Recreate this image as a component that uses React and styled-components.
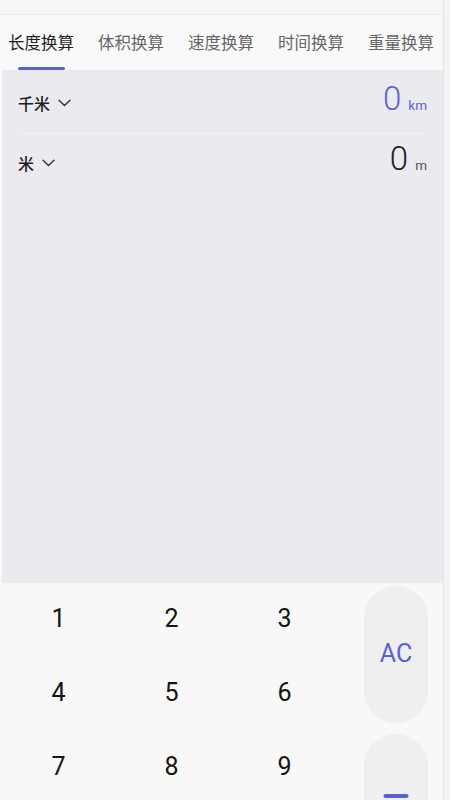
import React from 'react'
import styled, { createGlobalStyle } from 'styled-components'

const GlobalStyle = createGlobalStyle`
  html, body {
    margin: 0;
    padding: 0;
    background: #f8f8f8;
  }
  #root {
    width: 450px;
    height: 800px;
    overflow: hidden;
  }
`

const tabs = ['长度换算', '体积换算', '速度换算', '时间换算', '重量换算']
const keys = ['1', '2', '3', '4', '5', '6', '7', '8', '9']

const Chevron = () => (
  <svg width="13" height="8" viewBox="0 0 13 8" fill="none">
    <path d="M1 1.2L6.5 6.5L12 1.2" stroke="#333" strokeWidth="1.4" strokeLinecap="round" strokeLinejoin="round" />
  </svg>
)

export default function App() {
  return (
    <Page>
      <GlobalStyle />
      <Main>
        <StatusStrip />
        <TabBar>
          {tabs.map((t, i) => (
            <Tab key={t} active={i === 0}>
              {t}
              {i === 0 && <Indicator />}
            </Tab>
          ))}
        </TabBar>
        <Content>
          <UnitRow h={63}>
            <UnitPicker>
              千米 <Chevron />
            </UnitPicker>
            <Value>
              <Number active>0</Number>
              <Unit active>km</Unit>
            </Value>
          </UnitRow>
          <Divider />
          <UnitRow h={55}>
            <UnitPicker>
              米 <Chevron />
            </UnitPicker>
            <Value>
              <Number>0</Number>
              <Unit>m</Unit>
            </Value>
          </UnitRow>
        </Content>
        <Keypad>
          {keys.map((k, i) => (
            <Key key={k} style={{ gridColumn: (i % 3) + 1, gridRow: Math.floor(i / 3) + 1 }}>
              {k}
            </Key>
          ))}
          <Pill row="1 / span 2">AC</Pill>
          <Pill row="3 / span 2">
            <MinusBar />
          </Pill>
        </Keypad>
      </Main>
      <SideStrip />
    </Page>
  )
}

const Page = styled.div`
  display: flex;
  width: 450px;
  height: 800px;
  font-family: Roboto, "Noto Sans CJK SC", sans-serif;
`

const Main = styled.div`
  flex: 1;
  display: flex;
  flex-direction: column;
  min-width: 0;
  overflow: hidden;
`

const SideStrip = styled.div`
  width: 6px;
  background: #f3f3f4;
  border-left: 1px solid #e4e4e6;
`

const StatusStrip = styled.div`
  flex-shrink: 0;
  height: 14px;
  background: #f6f6f6;
  border-bottom: 1px solid #ececec;
`

const TabBar = styled.div`
  flex-shrink: 0;
  height: 55px;
  display: flex;
  gap: 24px;
  padding-left: 8px;
  background: #f9f9f9;
  box-sizing: border-box;
`

const Tab = styled.div`
  position: relative;
  flex-shrink: 0;
  font-family: "Noto Sans CJK SC", sans-serif;
  font-size: 16.5px;
  line-height: 55px;
  height: 55px;
  color: ${p => (p.active ? '#1f1f1f' : '#666')};
  white-space: nowrap;
`

const Indicator = styled.span`
  position: absolute;
  left: 10px;
  bottom: 0;
  width: 47px;
  height: 3.5px;
  border-radius: 2px;
  background: #5a5fd6;
`

const Content = styled.div`
  flex-shrink: 0;
  height: 513px;
  background: #ebeaef;
  margin-left: 2px;
  padding: 0 15px;
`

const UnitRow = styled.div`
  height: ${p => p.h}px;
  display: flex;
  align-items: center;
  justify-content: space-between;
`

const UnitPicker = styled.div`
  display: flex;
  align-items: center;
  gap: 8px;
  margin-top: 2px;
  font-family: "Noto Sans CJK SC", sans-serif;
  font-size: 16px;
  font-weight: 500;
  color: #222;
  padding-left: 1px;
`

const Value = styled.div`
  display: flex;
  align-items: baseline;
  gap: 7px;
  margin-top: -6px;
  padding-right: 1px;
`

const Number = styled.span`
  font-size: 33px;
  font-weight: 300;
  color: ${p => (p.active ? '#5a62d6' : '#222')};
`

const Unit = styled.span`
  font-size: 13.5px;
  color: ${p => (p.active ? '#5a62d6' : '#555')};
`

const Divider = styled.div`
  height: 1px;
  margin: 0 4px 0 3px;
  background: #f3f2f6;
`

const Keypad = styled.div`
  flex: 1;
  display: grid;
  grid-template-columns: 113px 113px 113px 1fr;
  grid-auto-rows: 74px;
  padding-left: 2px;
  background: #f8f8f8;
  overflow: hidden;
`

const Key = styled.div`
  display: flex;
  align-items: center;
  justify-content: center;
  padding-bottom: 4px;
  font-size: 25px;
  color: #151515;
`

const Pill = styled.div`
  grid-column: 4;
  grid-row: ${p => p.row};
  margin: 3px 15px 8px 23px;
  border-radius: 32px;
  background: #efefef;
  display: flex;
  align-items: center;
  justify-content: center;
  padding-bottom: 2px;
  font-size: 25px;
  color: #5a62d6;
  position: relative;
`

const MinusBar = styled.span`
  position: absolute;
  top: 60px;
  left: 50%;
  transform: translateX(-50%);
  width: 25px;
  height: 4px;
  border-radius: 2px;
  background: #5a62d6;
`
